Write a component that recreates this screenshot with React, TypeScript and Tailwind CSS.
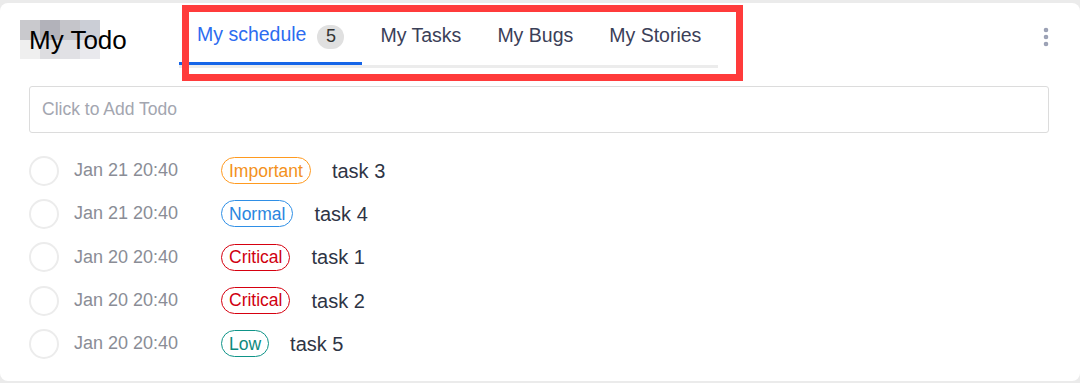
import { EllipsisVertical } from 'lucide-react';

type Priority = 'Important' | 'Normal' | 'Critical' | 'Low';

interface Todo {
  id: number;
  date: string;
  priority: Priority;
  title: string;
}

const todos: Todo[] = [
  { id: 3, date: 'Jan 21 20:40', priority: 'Important', title: 'task 3' },
  { id: 4, date: 'Jan 21 20:40', priority: 'Normal', title: 'task 4' },
  { id: 1, date: 'Jan 20 20:40', priority: 'Critical', title: 'task 1' },
  { id: 2, date: 'Jan 20 20:40', priority: 'Critical', title: 'task 2' },
  { id: 5, date: 'Jan 20 20:40', priority: 'Low', title: 'task 5' },
];

const priorityStyles: Record<Priority, string> = {
  Important: 'border-[#ff9a1f] text-[#f39120]',
  Normal: 'border-[#2f8fe6] text-[#2a86e0]',
  Critical: 'border-[#d6000f] text-[#d00010]',
  Low: 'border-[#0f9488] text-[#0f8a7e]',
};

const tabs = ['My schedule', 'My Tasks', 'My Bugs', 'My Stories'];

// pixelated blur behind the title
const mosaic = [
  'bg-[#c9c9cd]', 'bg-[#b2b2ba]', 'bg-[#c5c5ca]', 'bg-[#cbced6]',
  'bg-[#efefef]', 'bg-[#dddde0]', 'bg-[#e1e1e5]', 'bg-[#e9e9ed]',
];

export default function App() {
  return (
    <div className="w-[1080px] h-[383px] bg-[#ebebeb] pt-[3px] pb-[2px] font-['Liberation_Sans',Arial,sans-serif]">
      <div className="relative h-full bg-white rounded-[8px] pl-[29px] pr-[31px]">
        {/* Header */}
        <div className="flex items-start h-[65px]">
          <div className="relative w-[150px] shrink-0 h-full">
            <div className="absolute left-[-9px] top-[17px] grid grid-cols-4 w-[80px] h-[39px]">
              {mosaic.map((c, i) => (
                <div key={i} className={c} />
              ))}
            </div>
            <div className="relative pt-[21px] text-[26px] leading-[32px] text-black">My Todo</div>
          </div>

          <div className="flex h-full shrink-0 border-b-[3px] border-[#ececec] w-[539px]">
            {tabs.map((tab, i) => (
              <div
                key={tab}
                className={`flex items-center shrink-0 whitespace-nowrap px-[18px] h-[62px] mb-[-3px] text-[19.5px] ${
                  i === 0
                    ? 'text-[#2c6cf0] border-b-[3px] border-[#1565e8]'
                    : 'text-[#3b4058]'
                }`}
              >
                <span className="pt-[4px]">{tab}</span>
                {i === 0 && (
                  <span className="ml-[11px] mt-[8px] w-[27px] h-[24px] rounded-full bg-[#e0e0e0] text-[#333] text-[18px] flex items-center justify-center">
                    5
                  </span>
                )}
              </div>
            ))}
          </div>

          <div className="ml-auto mr-[-9px] pt-[22px] text-[#9aa0b4]">
            <EllipsisVertical size={24} strokeWidth={2.6} />
          </div>
        </div>

        {/* Add todo */}
        <div className="mt-[18px] h-[47px] border border-[#dcdcdc] rounded-[3px] flex items-center px-[12px]">
          <span className="text-[17.5px] text-[#a3a6b0]">Click to Add Todo</span>
        </div>

        {/* Todo list */}
        <div className="mt-[16px]">
          {todos.map((todo) => (
            <div key={todo.id} className="flex items-center h-[43.3px]">
              <div className="w-[30px] h-[30px] rounded-full border-2 border-[#ececec] shrink-0" />
              <span className="ml-[15px] w-[147px] text-[18px] text-[#8a8d96]">{todo.date}</span>
              <span
                className={`h-[27px] px-[7px] rounded-full border text-[17.5px] flex items-center ${priorityStyles[todo.priority]}`}
              >
                {todo.priority}
              </span>
              <span className="ml-[21px] text-[20px] text-[#2e3445]">{todo.title}</span>
            </div>
          ))}
        </div>

        {/* annotation frame */}
        <div className="absolute left-[182px] top-[2px] w-[561px] h-[76px] border-[7px] border-[#ff3b3b] pointer-events-none" />
      </div>
    </div>
  );
}
